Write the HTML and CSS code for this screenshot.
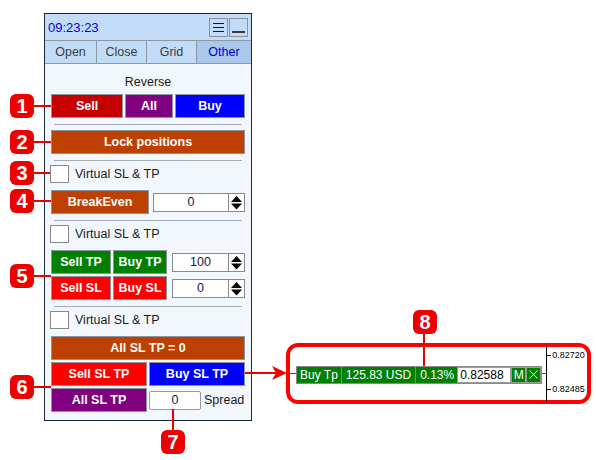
FILE: index.html
```html
<!DOCTYPE html>
<html lang="en">
<head>
    <meta charset="UTF-8">
    <meta name="viewport" content="width=device-width, initial-scale=1.0">
    <title>Trade Panel - Other</title>
    <link rel="stylesheet" href="styles.css">
</head>
<body>
    <div class="stage">
        <div class="panel">
            <div class="head">
                <span class="clock">09:23:23</span>
                <div class="head-btns">
                    <button class="icon-btn">
                        <svg width="17" height="17" viewBox="0 0 17 17">
                            <path d="M3 4.5H14M3 8.5H14M3 12.5H14" stroke="#0000c8" stroke-width="1.2"/>
                        </svg>
                    </button>
                    <button class="icon-btn">
                        <svg width="17" height="17" viewBox="0 0 17 17">
                            <path d="M2 13H15" stroke="#3a3a3a" stroke-width="2"/>
                        </svg>
                    </button>
                </div>
            </div>

            <div class="tabs">
                <div class="tab">Open</div>
                <div class="tab">Close</div>
                <div class="tab">Grid</div>
                <div class="tab on">Other</div>
            </div>

            <div class="content">
                <div class="caption">Reverse</div>
                <div class="row">
                    <button class="btn dark-red w72">Sell</button>
                    <button class="btn purple w48">All</button>
                    <button class="btn blue grow">Buy</button>
                </div>

                <div class="sep"></div>
                <button class="btn rust">Lock positions</button>

                <div class="sep"></div>
                <div class="check"><span class="box"></span>Virtual SL &amp; TP</div>
                <div class="row">
                    <button class="btn rust w98">BreakEven</button>
                    <div class="num grow ml2">
                        <span class="val">0</span>
                        <span class="spin">
                            <svg width="15" height="17" viewBox="0 0 15 17">
                                <path d="M2 8L7.5 2L13 8Z M2 9.5H13L7.5 15.5Z" fill="#000"/>
                            </svg>
                        </span>
                    </div>
                </div>

                <div class="sep"></div>
                <div class="check"><span class="box"></span>Virtual SL &amp; TP</div>
                <div class="row">
                    <button class="btn green w60">Sell TP</button>
                    <button class="btn green w54">Buy TP</button>
                    <div class="num grow ml3">
                        <span class="val">100</span>
                        <span class="spin">
                            <svg width="15" height="17" viewBox="0 0 15 17">
                                <path d="M2 8L7.5 2L13 8Z M2 9.5H13L7.5 15.5Z" fill="#000"/>
                            </svg>
                        </span>
                    </div>
                </div>
                <div class="row mt2">
                    <button class="btn red w60">Sell SL</button>
                    <button class="btn red w54">Buy SL</button>
                    <div class="num grow ml3">
                        <span class="val">0</span>
                        <span class="spin">
                            <svg width="15" height="17" viewBox="0 0 15 17">
                                <path d="M2 8L7.5 2L13 8Z M2 9.5H13L7.5 15.5Z" fill="#000"/>
                            </svg>
                        </span>
                    </div>
                </div>

                <div class="sep"></div>
                <div class="check"><span class="box"></span>Virtual SL &amp; TP</div>
                <button class="btn rust">All SL TP = 0</button>
                <div class="row mt2">
                    <button class="btn red grow">Sell SL TP</button>
                    <button class="btn blue grow">Buy SL TP</button>
                </div>
                <div class="row mt2">
                    <button class="btn purple w96">All SL TP</button>
                    <div class="num spread"><span class="val">0</span></div>
                    <span class="label">Spread</span>
                </div>
            </div>
        </div>

        <!-- chart line with its order bar -->
        <div class="callout">
            <span class="lead"></span>
            <div class="bar">
                <span class="cell">Buy Tp</span>
                <span class="cell">125.83 USD</span>
                <span class="cell last">0.13%</span>
                <span class="price">0.82588</span>
                <span class="mini">M</span>
                <span class="mini">
                    <svg width="9" height="9" viewBox="0 0 9 9">
                        <path d="M0.5 0.5L8.5 8.5M8.5 0.5L0.5 8.5" stroke="#fff" stroke-width="1"/>
                    </svg>
                </span>
            </div>
            <span class="lead short"></span>
            <div class="axis">
                <div class="tick t1"><i></i>0.82720</div>
                <div class="tick t2"><i></i>0.82485</div>
            </div>
        </div>

        <!-- leader lines -->
        <svg class="leaders" width="596" height="460" viewBox="0 0 596 460">
            <path d="M34 106H51M34 142H51M34 173H50M34 201H51M34 276H51M34 387H51M173 409V430M424 333V366M245 373H279"
                  stroke="#ee0000" stroke-width="2" fill="none"/>
            <path d="M287 373L272 366L276 373L272 380Z" fill="#ee0000"/>
        </svg>

        <div class="badge b1">1</div>
        <div class="badge b2">2</div>
        <div class="badge b3">3</div>
        <div class="badge b4">4</div>
        <div class="badge b5">5</div>
        <div class="badge b6">6</div>
        <div class="badge b7">7</div>
        <div class="badge b8">8</div>
    </div>
</body>
</html>
```

FILE: styles.css
```css
* {
    box-sizing: border-box;
}

body {
    margin: 0;
    background: #fff;
    font-family: "Liberation Sans", Arial, sans-serif;
    color: #1a1a1a;
}

.stage {
    position: relative;
    width: 596px;
    height: 460px;
    padding: 13px 0 0 44px;
    overflow: hidden;
}

/* panel */
.panel {
    width: 208px;
    border: 1px solid #1d2740;
    background: #f2f7fd;
}

.head {
    display: flex;
    align-items: center;
    justify-content: space-between;
    height: 26px;
    padding: 0 3px;
    background: #c2dcf7;
}

.clock {
    color: #0000e6;
    font-size: 13px;
}

.head-btns {
    display: flex;
    gap: 1px;
    margin-top: 1px;
}

.icon-btn {
    display: block;
    width: 19px;
    height: 19px;
    padding: 0;
    border: 1px solid #8c9298;
    background: #c2dcf7;
}

.icon-btn svg {
    display: block;
}

.tabs {
    display: grid;
    grid-template-columns: 51px 50px 50px 1fr;
    height: 24px;
    border-top: 1px solid #8c98a6;
    border-bottom: 1px solid #8c98a6;
    background: #c2dcf7;
}

.tab {
    border-left: 1px solid #8c98a6;
    text-align: center;
    line-height: 22px;
    font-size: 12.5px;
    color: #3c3c3c;
}

.tab:first-child {
    border-left: none;
}

.tab.on {
    background: #a9c8eb;
    color: #0000d8;
}

.content {
    display: flex;
    flex-direction: column;
    padding: 0 6px 8px;
}

.caption {
    height: 30px;
    padding-top: 10px;
    line-height: 16px;
    text-align: center;
    font-size: 12.5px;
}

.row {
    display: flex;
    align-items: center;
    gap: 2px;
    height: 24px;
}

.mt2 {
    margin-top: 2px;
}

.sep {
    height: 1px;
    margin: 6px 3px 5px;
    background: #a4acb6;
}

/* buttons */
.btn {
    height: 24px;
    padding: 0;
    border: 1px solid #8c96a0;
    color: #fff;
    font: bold 12.5px "Liberation Sans", Arial, sans-serif;
    flex-shrink: 0;
}

.dark-red { background: #c60000; }
.red { background: #ff0000; }
.purple { background: #800080; }
.blue { background: #0000ff; }
.green { background: #008000; }
.rust { background: #be4000; }

.w48 { width: 48px; }
.w54 { width: 54px; }
.w60 { width: 60px; }
.w72 { width: 72px; }
.w96 { width: 96px; }
.w98 { width: 98px; }
.grow { flex: 1; }

/* checkbox rows */
.check {
    display: flex;
    align-items: center;
    gap: 6px;
    height: 18px;
    margin: -1px 0 7px -1px;
    font-size: 12.5px;
}

.box {
    width: 19px;
    height: 18px;
    border: 1px solid #8a8a8a;
    background: #fff;
}

/* number inputs */
.num {
    display: flex;
    height: 19px;
    border: 1px solid #8a8a8a;
    background: #fff;
}

.ml2 { margin-left: 2px; }
.ml3 { margin-left: 3px; }

.val {
    flex: 1;
    text-align: center;
    line-height: 17px;
    font-size: 12.5px;
    color: #10184a;
}

.spin {
    width: 16px;
    border-left: 1px solid #8a8a8a;
}

.spin svg {
    display: block;
}

.spread {
    width: 52px;
    height: 19px;
    border-color: #9a9a9a;
    border-radius: 2px;
}

.label {
    margin-left: 1px;
    font-size: 12.5px;
}

/* chart callout */
.callout {
    position: absolute;
    left: 286px;
    top: 343px;
    width: 305px;
    height: 61px;
    display: flex;
    align-items: center;
    border: 4px solid #ff0000;
    border-radius: 12px;
    background: #fff;
}

.lead {
    width: 6px;
    height: 1px;
    background: #008000;
}

.lead.short {
    width: 4px;
}

.bar {
    display: flex;
    height: 18px;
    margin-top: 2px;
    border: 1px solid #8a8a8a;
    background: #008000;
    color: #fff;
    font-size: 12px;
}

.cell {
    padding: 0 4px;
    line-height: 16px;
    border-right: 1px solid #6a9c6a;
}

.cell:first-child {
    padding: 0 3px;
}

.cell.last {
    border-right: none;
    padding: 0 3px 0 4px;
}

.price {
    width: 54px;
    padding-left: 2px;
    border: 1px solid #9a9a9a;
    background: #fff;
    color: #000;
    line-height: 14px;
}

.mini {
    display: flex;
    align-items: center;
    justify-content: center;
    width: 15px;
    border: 1px solid #9a9a9a;
    line-height: 14px;
}

.axis {
    position: relative;
    align-self: stretch;
    flex: 1;
    margin: -2px 0;
    border-left: 1px solid #000;
}

.tick {
    position: absolute;
    left: 0;
    display: flex;
    align-items: center;
    gap: 1px;
    font-size: 9px;
    line-height: 10px;
    color: #000;
}

.tick i {
    width: 4px;
    height: 1px;
    background: #000;
}

.t1 { top: 5px; }
.t2 { top: 39px; }

/* annotations */
.leaders {
    position: absolute;
    left: 0;
    top: 0;
    pointer-events: none;
}

.badge {
    position: absolute;
    width: 24px;
    height: 24px;
    border-radius: 6px;
    background: #ee0000;
    color: #fff;
    font: bold 20px/24px "Liberation Sans", Arial, sans-serif;
    text-align: center;
}

.b1 { left: 10px; top: 94px; }
.b2 { left: 10px; top: 130px; }
.b3 { left: 10px; top: 161px; }
.b4 { left: 10px; top: 189px; }
.b5 { left: 10px; top: 264px; }
.b6 { left: 10px; top: 375px; }
.b7 { left: 161px; top: 430px; }
.b8 { left: 413px; top: 310px; }
```
